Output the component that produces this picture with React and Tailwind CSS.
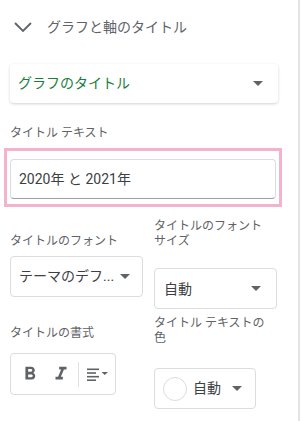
const font = { fontFamily: '"Roboto", "Noto Sans CJK JP", sans-serif' };

function Caret({ className = "" }) {
    return (
        <svg width="10" height="5" viewBox="0 0 10 5" className={className}>
            <path d="M0 0 L10 0 L5 5 Z" fill="#5f6368" />
        </svg>
    );
}

export default function App() {
    return (
        <div
            className="relative w-[301px] h-[421px] bg-white overflow-hidden text-[#3c4043]"
            style={font}
        >
            {/* right edge line */}
            <div className="absolute right-[1px] top-0 bottom-0 w-[2px] bg-[#e3e3e3]" />

            {/* section header */}
            <div className="flex items-center h-[28px] mt-[13px] pl-[14px]">
                <svg width="18" height="10" viewBox="0 0 18 10">
                    <path d="M1 1 L9 9 L17 1" fill="none" stroke="#5f6368" strokeWidth="1.8" />
                </svg>
                <span className="ml-[15px] text-[14px] text-[#5f6368]">グラフと軸のタイトル</span>
            </div>

            {/* title type dropdown */}
            <div className="mt-[23px] ml-[10px] w-[268px] h-[39px] rounded-[4px] shadow-[0_1px_3px_rgba(0,0,0,0.18)] flex items-center justify-between pl-[8px] pr-[15px]">
                <span className="text-[14px] text-[#188038]">グラフのタイトル</span>
                <Caret />
            </div>

            {/* title text */}
            <div className="mt-[22px] ml-[10px] text-[12px] leading-[16px] text-[#5f6368]">タイトル テキスト</div>
            <div className="mt-[7px] ml-[4px] w-[278px] h-[59px] border-[3px] border-[#f4b3cc] px-[3px] pt-[8px]">
                <div className="h-[40px] rounded-[4px] border border-[#dadce0] border-b-[#9aa0a6] flex items-center pl-[8px] text-[14px] text-[#3c4043]">
                    2020年 と 2021年
                </div>
            </div>

            {/* font row */}
            <div className="flex mt-[12px] pl-[10px]">
                <div className="w-[144px] flex flex-col">
                    <div className="mt-[15px] text-[12px] leading-[15px] text-[#5f6368] whitespace-nowrap">タイトルのフォント</div>
                    <div className="mt-[7px] w-[133px] h-[41px] rounded-[4px] border border-[#dadce0] flex items-center justify-between pl-[8px] pr-[12px]">
                        <span className="text-[14px] text-[#3c4043] whitespace-nowrap">テーマのデフ...</span>
                        <Caret />
                    </div>
                </div>
                <div className="flex flex-col">
                    <div className="text-[12px] leading-[15px] text-[#5f6368] w-[118px]">タイトルのフォントサイズ</div>
                    <div className="mt-[19px] w-[123px] h-[41px] rounded-[4px] border border-[#dadce0] flex items-center justify-between pl-[9px] pr-[15px]">
                        <span className="text-[14px] text-[#3c4043] mt-[2px]">自動</span>
                        <Caret />
                    </div>
                </div>
            </div>

            {/* format row */}
            <div className="flex mt-[7px] pl-[10px]">
                <div className="w-[144px] flex flex-col">
                    <div className="mt-[10px] text-[12px] leading-[15px] text-[#5f6368] whitespace-nowrap">タイトルの書式</div>
                    <div className="mt-[12px] w-[106px] h-[42px] rounded-[4px] border border-[#dadce0] flex items-center pl-[8px]">
                        <svg width="22" height="22" viewBox="0 0 24 24">
                            <path
                                fill="#5f6368"
                                d="M15.6 10.79c.97-.67 1.65-1.77 1.65-2.79 0-2.26-1.75-4-4-4H7v14h7.04c2.09 0 3.71-1.7 3.71-3.79 0-1.52-.86-2.82-2.15-3.42zM10 6.5h3c.83 0 1.5.67 1.5 1.5s-.67 1.5-1.5 1.5h-3v-3zm3.5 9H10v-3h3.5c.83 0 1.5.67 1.5 1.5s-.67 1.5-1.5 1.5z"
                            />
                        </svg>
                        <svg width="22" height="22" viewBox="0 0 24 24" className="ml-[9px]">
                            <path fill="#5f6368" d="M10 4v3h2.21l-3.42 8H6v3h8v-3h-2.21l3.42-8H18V4z" />
                        </svg>
                        <div className="ml-[6px] w-px h-[25px] bg-[#e0e0e0]" />
                        <svg width="23" height="13" viewBox="0 0 23 13" className="ml-[8px]">
                            <rect x="0" y="0.5" width="12" height="1.6" fill="#5f6368" />
                            <rect x="0" y="4.2" width="9" height="1.6" fill="#5f6368" />
                            <rect x="0" y="7.9" width="12" height="1.6" fill="#5f6368" />
                            <rect x="0" y="11.4" width="9" height="1.6" fill="#5f6368" />
                            <path d="M14.5 4 L21 4 L17.75 7 Z" fill="#5f6368" />
                        </svg>
                    </div>
                </div>
                <div className="flex flex-col">
                    <div className="text-[12px] leading-[15px] text-[#5f6368] w-[118px]">タイトル テキストの色</div>
                    <div className="mt-[22px] w-[102px] h-[41px] rounded-[4px] border border-[#dadce0] flex items-center pl-[8px] pr-[13px]">
                        <div className="w-[24px] h-[24px] rounded-full border border-[#dadce0] bg-white" />
                        <span className="ml-[6px] text-[14px] text-[#3c4043]">自動</span>
                        <Caret className="ml-auto" />
                    </div>
                </div>
            </div>
        </div>
    );
}
